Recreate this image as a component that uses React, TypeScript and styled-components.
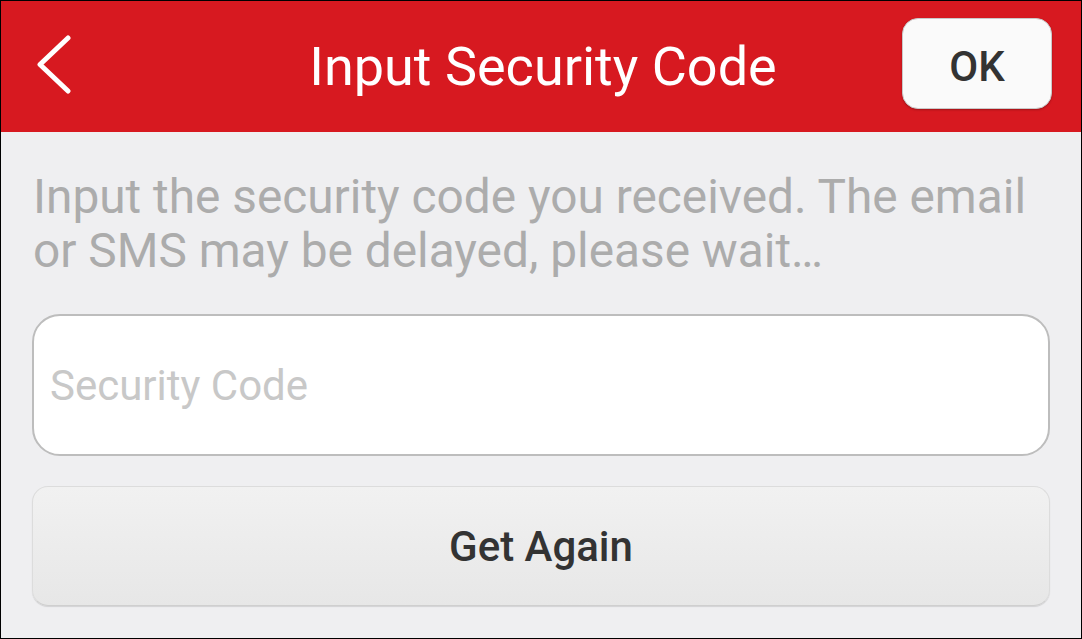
import React from "react";
import styled, { createGlobalStyle } from "styled-components";

const GlobalStyle = createGlobalStyle`
  html, body {
    margin: 0;
    padding: 0;
    background: #000;
  }
  * {
    box-sizing: border-box;
  }
`;

const Screen = styled.div`
  width: 1082px;
  height: 639px;
  border: 1px solid #000;
  background: #efeff1;
  font-family: Roboto, "Noto Sans", sans-serif;
  display: flex;
  flex-direction: column;
  overflow: hidden;
`;

const TopBar = styled.header`
  height: 131px;
  flex: none;
  background: #d71920;
  display: grid;
  grid-template-columns: 1fr auto 1fr;
  align-items: center;
  padding: 0 29px 6px 33px;
`;

const BackButton = styled.button`
  justify-self: start;
  background: none;
  border: none;
  padding: 0;
  margin-top: 6px;
  width: 40px;
  height: 64px;
  cursor: pointer;
  display: flex;
`;

const Title = styled.h1`
  margin: 6px 0 0;
  color: #fff;
  font-size: 54px;
  font-weight: 400;
  white-space: nowrap;
`;

const OkButton = styled.button`
  justify-self: end;
  width: 150px;
  height: 91px;
  border-radius: 16px;
  border: 1px solid #c9c9c9;
  background: #fafafa;
  box-shadow: 0 1px 2px rgba(0, 0, 0, 0.25);
  color: #333;
  font-family: Roboto, sans-serif;
  font-size: 42px;
  font-weight: 500;
  padding: 5px 0 0;
  cursor: pointer;
`;

const Content = styled.main`
  display: flex;
  flex-direction: column;
  padding: 38px 31px 0 31px;
`;

const Hint = styled.p`
  margin: 0;
  color: #acacac;
  font-size: 47.8px;
  line-height: 54px;
  padding-left: 1px;
`;

const CodeInput = styled.input`
  margin-top: 36px;
  height: 142px;
  width: 100%;
  border: 2px solid #bdbdbd;
  border-radius: 28px;
  background: #fff;
  padding: 0 16px;
  font-family: Roboto, sans-serif;
  font-size: 42px;
  color: #333;
  outline: none;

  &::placeholder {
    color: #c8c8c8;
  }
`;

const AgainButton = styled.button`
  margin-top: 30px;
  height: 120px;
  width: 100%;
  border: 1px solid #dcdcdc;
  border-bottom-color: #cfcfcf;
  border-radius: 16px;
  background: linear-gradient(#f1f1f1, #e7e7e7);
  box-shadow: 0 1px 1px rgba(0, 0, 0, 0.12);
  color: #333;
  font-family: Roboto, sans-serif;
  font-size: 42px;
  font-weight: 500;
  cursor: pointer;
`;

const Chevron = () => (
  <svg width="40" height="64" viewBox="0 0 40 64" fill="none">
    <polyline
      points="34,3 6,29.5 34,56"
      stroke="#fff"
      strokeWidth="5"
      strokeLinecap="round"
      strokeLinejoin="round"
    />
  </svg>
);

export default function App() {
  return (
    <>
      <GlobalStyle />
      <Screen>
        <TopBar>
          <BackButton aria-label="Back">
            <Chevron />
          </BackButton>
          <Title>Input Security Code</Title>
          <OkButton>OK</OkButton>
        </TopBar>
        <Content>
          <Hint>
            Input the security code you received. The email or SMS may be
            delayed, please wait…
          </Hint>
          <CodeInput placeholder="Security Code" />
          <AgainButton>Get Again</AgainButton>
        </Content>
      </Screen>
    </>
  );
}
